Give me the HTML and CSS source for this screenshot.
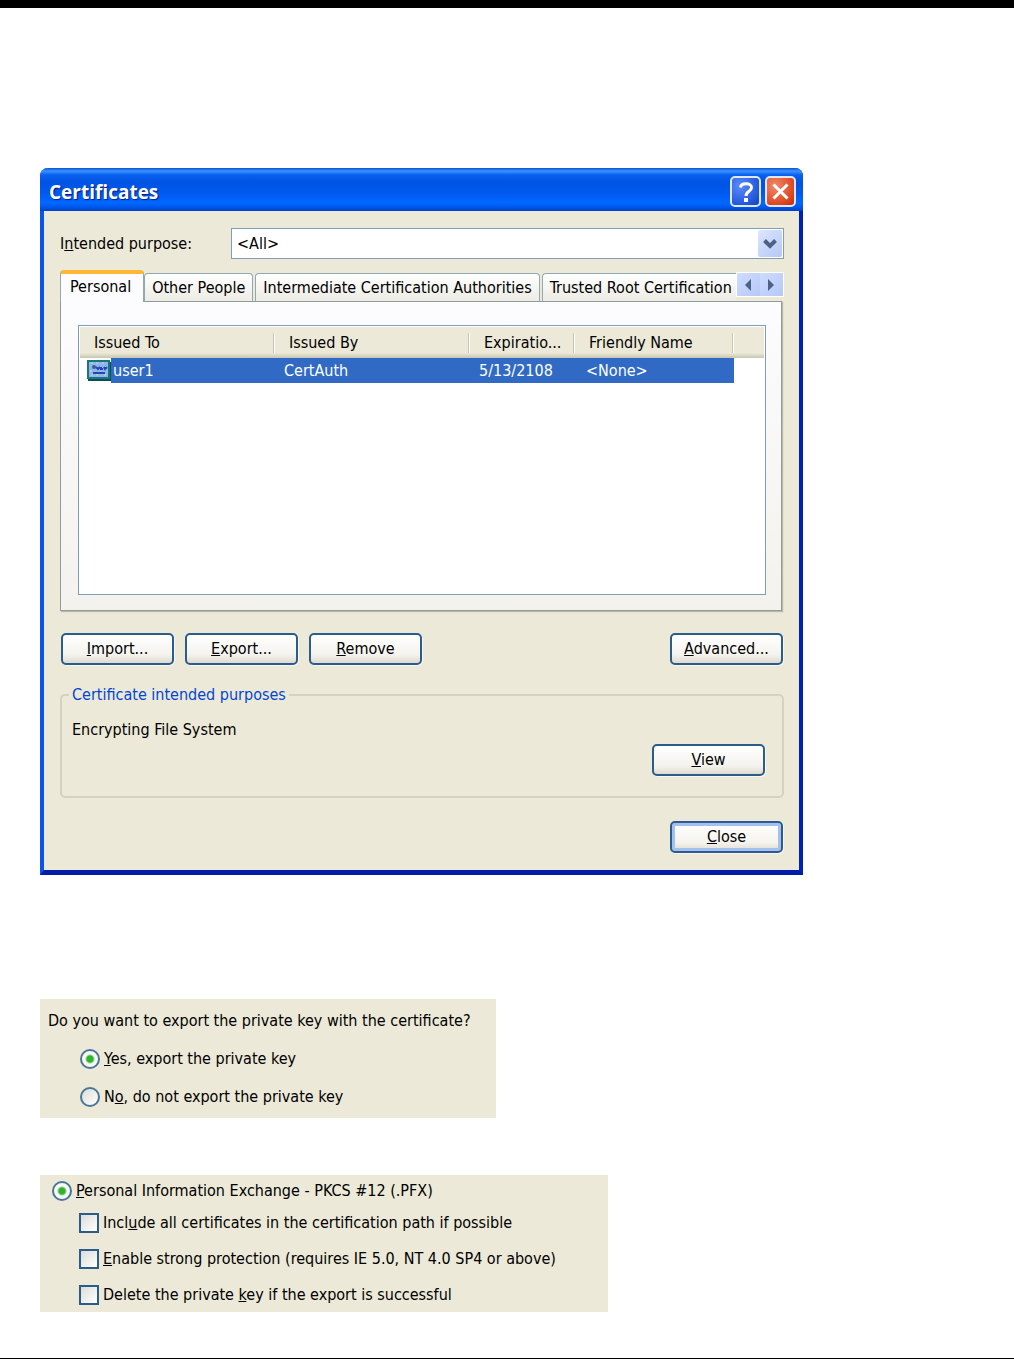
FILE: index.html
```html
<!DOCTYPE html>
<html lang="en">
<head>
    <meta charset="UTF-8">
    <meta name="viewport" content="width=device-width, initial-scale=1.0">
    <title>Certificates</title>
    <link rel="stylesheet" href="styles.css">
</head>
<body>
    <main class="page">
        <!-- Certificates dialog -->
        <section class="dialog">
            <header class="titlebar">
                <h1>Certificates</h1>
                <button type="button" class="title-btn help" aria-label="Help">
                    <svg viewBox="0 0 28 28" width="28" height="28"><path d="M8.500 9.500C9 4.500 19.500 4.500 19.500 9.500C19.500 13.500 14 13 14 18" fill="none" stroke="#fff" stroke-width="3"/><rect x="12" y="20" width="4" height="4" fill="#fff"/></svg>
                </button>
                <button type="button" class="title-btn close" aria-label="Close window">
                    <svg viewBox="0 0 28 28" width="28" height="28"><path d="M6.500 6.500L20.500 20.500M20.500 6.500L6.500 20.500" fill="none" stroke="#fff" stroke-width="3"/></svg>
                </button>
            </header>

            <div class="dialog-body">
                <div class="purpose-row">
                    <label for="purpose">I<u>n</u>tended purpose:</label>
                    <div class="select-box">
                        <select id="purpose">
                            <option>&lt;All&gt;</option>
                        </select>
                        <svg class="select-arrow" viewBox="0 0 24 27" width="24" height="27"><path d="M6.500 10.500L12 16L17.500 10.500" fill="none" stroke="#4d6185" stroke-width="4"/></svg>
                    </div>
                </div>

                <div class="tab-bar">
                    <div class="tabs" role="tablist">
                        <button type="button" role="tab" class="tab active" aria-selected="true">Personal</button>
                        <button type="button" role="tab" class="tab">Other People</button>
                        <button type="button" role="tab" class="tab">Intermediate Certification Authorities</button>
                        <button type="button" role="tab" class="tab last">Trusted Root Certification</button>
                    </div>
                    <div class="tab-scroll">
                        <button type="button" aria-label="Scroll left"><svg viewBox="0 0 10 12" width="10" height="12"><path d="M7 0V12L1 6Z" fill="#4d6185"/></svg></button>
                        <button type="button" aria-label="Scroll right"><svg viewBox="0 0 10 12" width="10" height="12"><path d="M1 0V12L7 6Z" fill="#4d6185"/></svg></button>
                    </div>
                </div>

                <div class="tab-panel">
                    <div class="list">
                        <table>
                            <colgroup>
                                <col class="col-name">
                                <col class="col-name">
                                <col class="col-date">
                                <col class="col-friendly">
                                <col>
                            </colgroup>
                            <thead>
                                <tr>
                                    <th>Issued To</th>
                                    <th>Issued By</th>
                                    <th>Expiratio...</th>
                                    <th>Friendly Name</th>
                                    <th></th>
                                </tr>
                            </thead>
                            <tbody>
                                <tr>
                                    <td class="name-cell">
                                        <div class="name">
                                            <svg viewBox="0 0 24 22" width="24" height="22">
                                                <rect x="1" y="2" width="23" height="19" fill="#0f4a5c"/>
                                                <rect width="23" height="19" fill="#167a74"/>
                                                <rect x="2" y="2" width="19" height="15" fill="#8fb4f0"/>
                                                <path d="M4 3h2M9 3h2M15 3h2M18 7h2M3 11h2M4 15h2M9 15h2M17 15h2" stroke="#d5dc9a" stroke-width="1"/>
                                                <circle cx="7" cy="7" r="2" fill="#3f5e86"/>
                                                <path d="M9 7L11 9L13 7M17 7L18 9L20 7M14 7V9H16M6 13H18" fill="none" stroke="#2449b4" stroke-width="2"/>
                                            </svg>
                                            <span>user1</span>
                                        </div>
                                    </td>
                                    <td>CertAuth</td>
                                    <td>5/13/2108</td>
                                    <td class="friendly">&lt;None&gt;</td>
                                    <td class="rest"></td>
                                </tr>
                            </tbody>
                        </table>
                    </div>
                </div>

                <div class="actions">
                    <button type="button" class="btn"><u>I</u>mport...</button>
                    <button type="button" class="btn"><u>E</u>xport...</button>
                    <button type="button" class="btn"><u>R</u>emove</button>
                    <button type="button" class="btn push"><u>A</u>dvanced...</button>
                </div>

                <fieldset class="purposes">
                    <legend>Certificate intended purposes</legend>
                    <p>Encrypting File System</p>
                    <button type="button" class="btn"><u>V</u>iew</button>
                </fieldset>

                <div class="dialog-footer">
                    <button type="button" class="btn default"><u>C</u>lose</button>
                </div>
            </div>
        </section>

        <!-- Private key question -->
        <section class="panel key-panel">
            <p>Do you want to export the private key with the certificate?</p>
            <div class="option">
                <input type="radio" name="key" id="key-yes" checked>
                <label for="key-yes"><u>Y</u>es, export the private key</label>
            </div>
            <div class="option">
                <input type="radio" name="key" id="key-no">
                <label for="key-no">N<u>o</u>, do not export the private key</label>
            </div>
        </section>

        <!-- Export format -->
        <section class="panel format-panel">
            <div class="option format">
                <input type="radio" name="format" id="pfx" checked>
                <label for="pfx"><u>P</u>ersonal Information Exchange - PKCS #12 (.PFX)</label>
            </div>
            <div class="option">
                <input type="checkbox" id="include-all">
                <label for="include-all">Incl<u>u</u>de all certificates in the certification path if possible</label>
            </div>
            <div class="option">
                <input type="checkbox" id="strong">
                <label for="strong"><u>E</u>nable strong protection (requires IE 5.0, NT 4.0 SP4 or above)</label>
            </div>
            <div class="option">
                <input type="checkbox" id="delete-key">
                <label for="delete-key">Delete the private <u>k</u>ey if the export is successful</label>
            </div>
        </section>
    </main>
</body>
</html>
```
FILE: styles.css
```css
* {
    box-sizing: border-box;
}
body {
    margin: 0;
    background: #fff;
    color: #000;
    font-family: "DejaVu Sans Condensed", "DejaVu Sans", sans-serif;
    font-size: 16px;
    line-height: 20px;
}
button, select {
    font: inherit;
    color: inherit;
}
p {
    margin: 0;
}
.page {
    min-height: 100vh;
    padding: 160px 40px 46px;
    border-top: 8px solid #000;
    border-bottom: 1px solid #000;
}

/* Dialog */
.dialog {
    max-width: 763px;
    border: 4px solid #0a55e8;
    border-top: 0;
    border-right-color: #0020b8;
    border-bottom: 5px solid #001ca8;
    border-radius: 8px 8px 0 0;
    background: #ece9d8;
}
.titlebar {
    display: flex;
    align-items: center;
    gap: 6px;
    height: 43px;
    margin: 0 -4px;
    padding: 4px 7px 0 9px;
    border-radius: 8px 8px 0 0;
    background: linear-gradient(#0a50d0 0, #3a94ff 3px, #0b5fee 7px, #0054e3 14px, #0058ee 24px, #0068ff 35px, #0058ee 39px, #0040c8 43px);
}
.titlebar h1 {
    flex: 1;
    margin: 0;
    color: #fff;
    font-family: "Open Sans", sans-serif;
    font-size: 19px;
    font-weight: 700;
    text-shadow: 1px 1px 1px #0a1883;
}
.title-btn {
    width: 31px;
    height: 31px;
    padding: 0;
    border: 2px solid #dfe8fb;
    border-radius: 5px;
    line-height: 0;
}
.title-btn + .title-btn {
    margin-left: -2px;
}
.title-btn svg {
    display: block;
}
.title-btn.help {
    background: radial-gradient(circle at 30% 30%, #5a8cf8, #2a5fe0 60%, #1243b8);
}
.title-btn.close {
    background: radial-gradient(circle at 30% 30%, #f08a68, #e2502a 60%, #c02c04);
}
.dialog-body {
    padding: 17px 15px 17px 16px;
}
.purpose-row {
    display: flex;
    align-items: center;
}
.purpose-row label {
    width: 171px;
}
.select-box {
    position: relative;
    flex: 1;
}
.select-box select {
    display: block;
    width: 100%;
    height: 31px;
    padding: 0 32px 0 5px;
    border: 1px solid #7f9db9;
    border-radius: 0;
    background: #fff;
    appearance: none;
}
.select-arrow {
    position: absolute;
    top: 2px;
    right: 2px;
    border-radius: 2px;
    background: linear-gradient(135deg, #dce6ff, #b4c8f6);
    pointer-events: none;
}

/* Tabs */
.tab-bar {
    position: relative;
    z-index: 1;
    display: flex;
    align-items: flex-end;
    height: 32px;
    margin: 11px 0 -1px;
}
.tabs {
    display: flex;
    flex: 1;
    align-items: flex-end;
    gap: 2px;
    min-width: 0;
    overflow: hidden;
}
.tab {
    flex: none;
    height: 29px;
    padding: 0 7px;
    border: 1px solid #91a7b4;
    border-bottom-color: #919b9c;
    border-radius: 4px 4px 0 0;
    background: linear-gradient(#fff, #ecebe4);
    white-space: nowrap;
}
.tab.active {
    height: 32px;
    margin-right: -2px;
    padding: 0 12px 3px 9px;
    border-top: 4px solid #fcb833;
    border-bottom: 0;
    background: #fcfcfe;
}
.tab.last {
    flex: 1 0 auto;
    padding-right: 0;
    border-right: 0;
    border-top-right-radius: 0;
    text-align: left;
}
.tab-scroll {
    display: flex;
    align-self: flex-start;
    margin-top: 2px;
    border: 1px solid #fff;
    background: #c2d2fc;
}
.tab-scroll button {
    display: flex;
    align-items: center;
    justify-content: center;
    width: 23px;
    height: 23px;
    padding: 0;
    border: 0;
    background: linear-gradient(135deg, #cfdcff, #b6c8f8);
}
.tab-panel {
    margin-right: 2px;
    padding: 23px 15px 15px 17px;
    border: 1px solid #919b9c;
    box-shadow: 1px 1px 1px #bcb9a8;
    background: linear-gradient(#fcfcfe, #f3f2ed);
}
.list {
    height: 270px;
    padding: 1px;
    border: 1px solid #7f9db9;
    background: #fff;
}
.list table {
    width: 100%;
    border-collapse: collapse;
    table-layout: fixed;
}
.col-name {
    width: 195px;
}
.col-date {
    width: 105px;
}
.col-friendly {
    width: 159px;
}
.list thead {
    background: linear-gradient(#ece9d8 26px, #c8c5b2 31px);
}
.list th {
    height: 31px;
    padding: 0 0 0 14px;
    background: linear-gradient(#c7c5b2, #c7c5b2) right 1px center / 1px 20px no-repeat, linear-gradient(#fff, #fff) right center / 1px 20px no-repeat;
    font-weight: 400;
    text-align: left;
    white-space: nowrap;
}
.list th:last-child {
    background: none;
}
.list td {
    height: 25px;
    padding: 0 0 0 9px;
    background: #316ac5;
    color: #fff;
}
.list .name-cell {
    padding: 0;
    background: #fff;
}
.list .friendly {
    padding-left: 11px;
}
.list .rest {
    background: #fff;
}
.name {
    display: flex;
    align-items: center;
    padding-left: 7px;
}
.name span {
    flex: 1;
    padding: 3px 2px 2px;
    background: #316ac5;
}

/* Buttons */
.btn {
    width: 113px;
    height: 32px;
    padding: 0;
    border: 2px solid #2a5c8c;
    border-radius: 5px;
    background: linear-gradient(#fff, #f4f3ee 70%, #dedbd0);
    box-shadow: 1px 1px 0 #f8f7f0;
}
.btn.default {
    box-shadow: inset 0 0 0 3px #a5c0f0, 1px 1px 0 #f8f7f0;
}
.actions {
    display: flex;
    gap: 11px;
    margin: 22px 1px 0;
}
.push {
    margin-left: auto;
}
.purposes {
    margin: 20px 0 0;
    padding: 15px 17px 20px 10px;
    border: 2px solid #d5d2c0;
    border-radius: 5px;
}
.purposes legend {
    margin-left: -3px;
    padding: 0 3px;
    color: #0046d5;
}
.purposes .btn {
    display: block;
    margin: 4px 0 0 auto;
}
.dialog-footer {
    display: flex;
    justify-content: flex-end;
    margin: 23px 1px 0;
}

/* Option panels */
.panel {
    background: #ece9d8;
}
.key-panel {
    max-width: 456px;
    margin-top: 124px;
    padding: 12px 8px 11px;
}
.option {
    display: flex;
    align-items: center;
    gap: 4px;
}
.key-panel .option {
    margin: 18px 0 0 32px;
}
.format-panel {
    max-width: 568px;
    margin-top: 57px;
    padding: 6px 12px 7px;
}
.format-panel .option {
    margin: 0 0 16px 27px;
}
.format-panel .option:last-child {
    margin-bottom: 0;
}
.format-panel .format {
    margin: 0 0 12px;
}
.option input {
    flex: none;
    width: 20px;
    height: 20px;
    margin: 0;
    border: 2px solid #2a5c8c;
    background: linear-gradient(135deg, #dcdcd7, #fff);
    appearance: none;
}
.option input[type="radio"] {
    border-color: #4a7698;
    border-radius: 50%;
}
.option input[type="radio"]:checked {
    background: radial-gradient(circle, #2fb52c 3px, #f8f8f6 5px);
}
```
